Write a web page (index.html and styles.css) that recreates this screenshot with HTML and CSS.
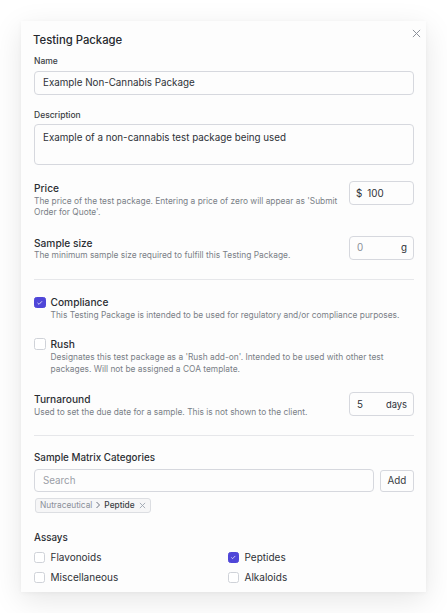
FILE: index.html
```html
<!DOCTYPE html>
<html>
<head>
<meta charset="utf-8">
<link rel="stylesheet" href="styles.css">
</head>
<body>
<div class="modal">
  <button class="close" aria-label="Close">
    <svg width="9" height="9" viewBox="0 0 10 10"><path d="M1 1L9 9M9 1L1 9" stroke="#8a8f98" stroke-width="1.1" fill="none"/></svg>
  </button>
  <h1 class="title">Testing Package</h1>

  <div class="field">
    <label class="small-label">Name</label>
    <div class="input">Example Non-Cannabis Package</div>
  </div>

  <div class="field field-desc">
    <label class="small-label">Description</label>
    <div class="input textarea">Example of a non-cannabis test package being used</div>
  </div>

  <div class="row row-price">
    <div class="row-text">
      <div class="row-label">Price</div>
      <div class="help">The price of the test package. Entering a price of zero will appear as 'Submit Order for Quote'.</div>
    </div>
    <div class="input small-input"><span class="prefix">$</span><span>100</span></div>
  </div>

  <div class="row row-size">
    <div class="row-text">
      <div class="row-label">Sample size</div>
      <div class="help">The minimum sample size required to fulfill this Testing Package.</div>
    </div>
    <div class="input small-input split"><span class="muted">0</span><span>g</span></div>
  </div>

  <hr class="divider">

  <div class="check-row">
    <span class="checkbox checked"><svg viewBox="0 0 12 12"><path d="M3.2 6.2L5.1 8L8.8 4.2" stroke="#fff" stroke-width="1" fill="none"/></svg></span>
    <div>
      <div class="row-label">Compliance</div>
      <div class="help">This Testing Package is intended to be used for regulatory and/or compliance purposes.</div>
    </div>
  </div>

  <div class="check-row check-rush">
    <span class="checkbox"></span>
    <div>
      <div class="row-label">Rush</div>
      <div class="help">Designates this test package as a 'Rush add-on'. Intended to be used with other test packages. Will not be assigned a COA template.</div>
    </div>
  </div>

  <div class="row row-turn">
    <div class="row-text">
      <div class="row-label">Turnaround</div>
      <div class="help">Used to set the due date for a sample. This is not shown to the client.</div>
    </div>
    <div class="input small-input split"><span>5</span><span class="unit">days</span></div>
  </div>

  <hr class="divider">

  <div class="section-label">Sample Matrix Categories</div>
  <div class="search-row">
    <div class="input search">Search</div>
    <button class="add-btn">Add</button>
  </div>
  <div class="tag">
    <span class="tag-muted">Nutraceutical</span>
    <svg class="chev" width="6" height="8" viewBox="0 0 6 8"><path d="M1.5 1L4.5 4L1.5 7" stroke="#6b7280" stroke-width="1" fill="none"/></svg>
    <span class="tag-strong">Peptide</span>
    <svg class="tag-x" width="7" height="7" viewBox="0 0 8 8"><path d="M1 1L7 7M7 1L1 7" stroke="#9ca3af" stroke-width="1" fill="none"/></svg>
  </div>

  <div class="section-label assays-label">Assays</div>
  <div class="assays">
    <div class="assay"><span class="checkbox sm"></span><span>Flavonoids</span></div>
    <div class="assay"><span class="checkbox sm checked"><svg viewBox="0 0 12 12"><path d="M3.2 6.2L5.1 8L8.8 4.2" stroke="#fff" stroke-width="1" fill="none"/></svg></span><span>Peptides</span></div>
    <div class="assay"><span class="checkbox sm"></span><span>Miscellaneous</span></div>
    <div class="assay"><span class="checkbox sm"></span><span>Alkaloids</span></div>
  </div>
</div>
</body>
</html>
```

FILE: styles.css
```css
* { box-sizing: border-box; }
html, body { margin: 0; padding: 0; }
body {
  background: #ffffff;
  font-family: Inter, "Noto Sans", sans-serif;
  color: #1f2328;
  width: 447px;
  height: 613px;
  overflow: hidden;
}
.modal {
  position: relative;
  margin: 21px 0 0 21px;
  width: 405px;
  height: 571px;
  background: #fdfdfd;
  box-shadow: 0 8px 28px rgba(0, 0, 0, 0.10), 0 1px 4px rgba(0, 0, 0, 0.04);
  padding: 11px 12px 0 13px;
  overflow: hidden;
}
.close {
  position: absolute;
  top: 7px;
  right: 5px;
  border: 0;
  background: none;
  padding: 0;
  width: 10px;
  height: 10px;
  display: flex;
  align-items: center;
  justify-content: center;
}
.title {
  margin: 0 0 0 -1px;
  font-size: 11.3px;
  line-height: 16px;
  font-weight: 500;
  color: #26292e;
}
.field { display: flex; flex-direction: column; }
.small-label {
  margin-top: 8px;
  font-size: 8.5px;
  line-height: 11px;
  font-weight: 500;
  color: #3a3e44;
  margin-bottom: 3.5px;
}
.field-desc .small-label { margin-top: 15px; }
.input {
  border: 1px solid #d6d8de;
  border-radius: 4px;
  height: 24px;
  font-size: 9.8px;
  color: #2e3137;
  display: flex;
  align-items: center;
  padding: 0 8px;
  background: #fdfdfd;
}
.textarea {
  height: 41px;
  align-items: flex-start;
  padding-top: 7px;
}
.row {
  display: flex;
  justify-content: space-between;
  align-items: flex-start;
  gap: 10px;
}
.row-price { margin-top: 16px; }
.row-size { margin-top: 17px; }
.row-turn { margin-top: 17px; }
.row-text { flex: 1; }
.row-label {
  font-size: 10.2px;
  line-height: 14px;
  font-weight: 500;
  color: #2b2e33;
}
.help {
  font-size: 8.4px;
  line-height: 11.7px;
  color: #7a7f87;
  margin-top: 0.5px;
}
.small-input {
  width: 65px;
  flex: 0 0 65px;
  padding: 0 6px;
}
.prefix { margin-right: 5px; }
.split { justify-content: space-between; padding: 0 6px 0 7px; }
.muted { color: #8a8f98; }
.unit { font-size: 9.4px; }
.divider {
  border: 0;
  border-top: 1px solid #e6e7ea;
  margin: 16.5px 0 15.5px;
}
.check-row {
  display: flex;
  gap: 5px;
  align-items: flex-start;
}
.check-rush { margin-top: 15px; }
.checkbox {
  width: 11.5px;
  height: 11.5px;
  flex: 0 0 11.5px;
  border: 1px solid #cfd2d8;
  border-radius: 2.5px;
  background: #fff;
  margin-top: 1.5px;
  display: inline-flex;
}
.checkbox.checked {
  background: #4f46d8;
  border-color: #4f46d8;
}
.checkbox svg { width: 100%; height: 100%; }
.check-row .help { margin-top: 1px; }
.section-label {
  margin-top: 1px;
  font-size: 9.8px;
  line-height: 14px;
  font-weight: 500;
  color: #2b2e33;
}
.search-row {
  display: flex;
  gap: 6px;
  margin-top: 4px;
  align-items: center;
}
.search {
  flex: 1;
  height: 23px;
  color: #9a9ea6;
}
.add-btn {
  width: 34px;
  height: 22px;
  border: 1px solid #d6d8de;
  border-radius: 3px;
  background: #fdfdfd;
  font-family: Inter, "Noto Sans", sans-serif;
  font-size: 9.8px;
  color: #3a3e44;
  padding: 0;
}
.tag {
  display: inline-flex;
  align-items: center;
  margin-top: 5px;
  margin-left: 1px;
  height: 15px;
  padding: 0 4px 0 4px;
  border: 1px solid #dcdee2;
  border-radius: 3px;
  background: #f6f6f7;
  font-size: 8.3px;
  gap: 2px;
}
.tag-muted { color: #8a8f98; }
.tag-strong { color: #3a3e44; font-weight: 500; }
.chev { margin: 0 1px; }
.tag-x { margin-left: 2px; }
.assays-label { margin-top: 18px; }
.assays {
  display: grid;
  grid-template-columns: 186px 1fr;
  column-gap: 8px;
  row-gap: 6px;
  margin-top: 5.5px;
}
.assay {
  display: flex;
  align-items: center;
  gap: 6px;
  font-size: 10px;
  line-height: 14px;
  color: #2e3137;
}
.checkbox.sm {
  width: 10.5px;
  height: 10.5px;
  flex: 0 0 10.5px;
  margin-top: 0;
}
```
